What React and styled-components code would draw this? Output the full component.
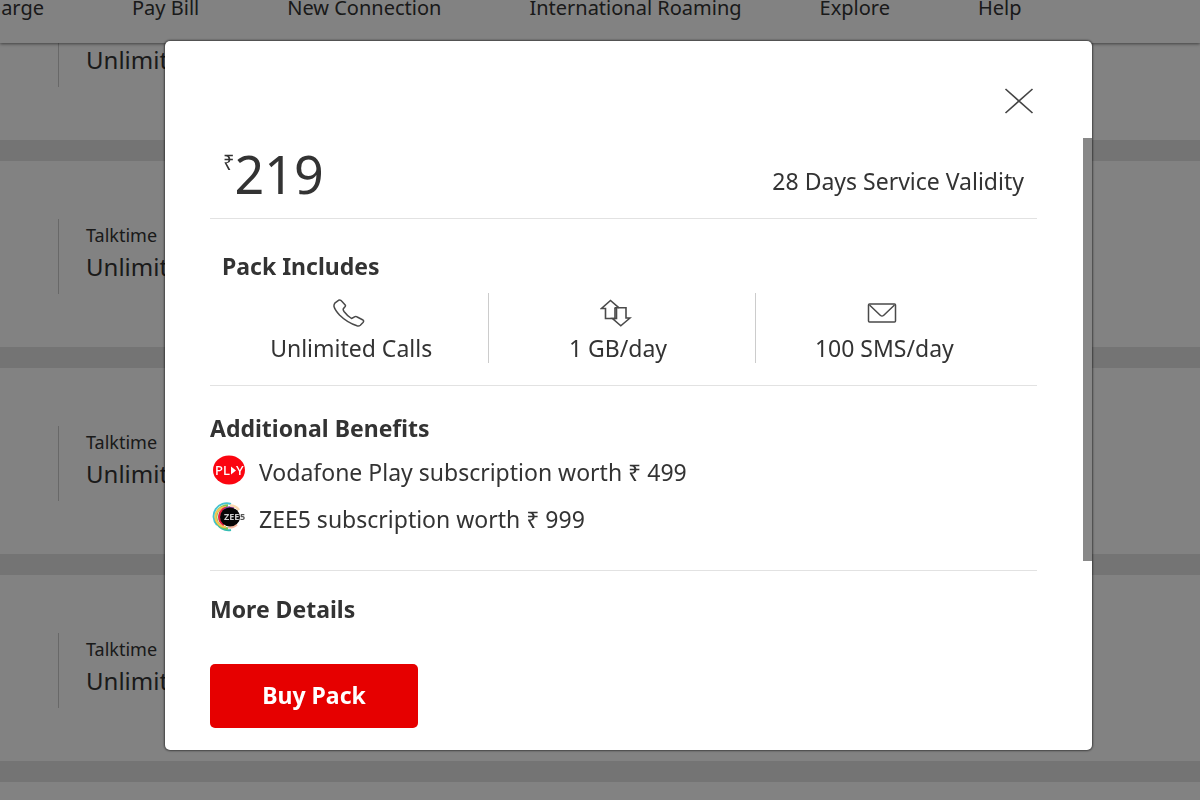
import React, { useState } from 'react';
import styled, { createGlobalStyle } from 'styled-components';

const NAV_ITEMS = [
  { label: 'Recharge', gap: 0, clipped: true },
  { label: 'Pay Bill', gap: 88 },
  { label: 'New Connection', gap: 88 },
  { label: 'International Roaming', gap: 88 },
  { label: 'Explore', gap: 78 },
  { label: 'Help', gap: 88 },
];

const PACK_ROWS = [
  { id: 1, value: 'Unlimited' },
  { id: 2, label: 'Talktime', value: 'Unlimited' },
  { id: 3, label: 'Talktime', value: 'Unlimited' },
  { id: 4, label: 'Talktime', value: 'Unlimited' },
];

const PhoneIcon = () => (
  <svg width="32" height="28" viewBox="0 0 32 28" fill="none" stroke="#4a4a4a" strokeWidth="1.5" strokeLinejoin="round" aria-hidden="true">
    <path d="M5.5 1.3Q7.5 0.4 8.8 2.2L12.2 6Q13 7.2 11.5 8.3L10.2 10Q10 11 11 12.5Q14 16.5 18.5 19.5L22 17.6Q23.2 17.2 24.2 18L30 21Q31.2 22 30 23.5L27.3 26.2Q26 27.3 24 26.8Q14 23.5 6.5 16Q2 11 1 7.5Q0.8 5.5 1.8 4.2Z" />
  </svg>
);

const DataIcon = () => (
  <svg width="32" height="28" viewBox="0 0 32 28" fill="none" stroke="#4a4a4a" strokeWidth="1.6" aria-hidden="true">
    <path d="M15 9V19.5H5.5V9.5H1.5L10.5 1.5L19 8.8" />
    <path d="M14.5 8.8H26V19H30L20.8 26.8L12.5 19.5H16.5V9" />
  </svg>
);

const MailIcon = () => (
  <svg width="30" height="20" viewBox="0 0 30 20" fill="none" stroke="#4a4a4a" strokeWidth="1.5" strokeLinejoin="round" aria-hidden="true">
    <rect x="1.5" y="1" width="27" height="18" rx="1" />
    <path d="M2.5 2L13.5 12.5Q15 13.6 16.5 12.5L27.5 2" />
  </svg>
);

const CloseIcon = () => (
  <svg width="30" height="26" viewBox="0 0 30 26" fill="none" stroke="#444" strokeWidth="1.6" aria-hidden="true">
    <path d="M1.5 1L28.5 25M28.5 1L1.5 25" />
  </svg>
);

const PlayLogo = () => (
  <svg width="34" height="30" viewBox="0 0 34 30" aria-hidden="true">
    <ellipse cx="17" cy="15" rx="16" ry="14.5" fill="#fb0510" />
    <text x="3" y="20" fontFamily="'Noto Sans', sans-serif" fontWeight="500" fontSize="13" fill="#fff">PL</text>
    <path d="M19 11.5L24 15.5L19 19.5Z" fill="#fff" />
    <text x="24" y="20" fontFamily="'Noto Sans', sans-serif" fontWeight="500" fontSize="13" fill="#fff">Y</text>
  </svg>
);

const ZeeLogo = () => (
  <svg width="34" height="30" viewBox="0 0 34 30" fill="none" aria-hidden="true">
    <path d="M19 2A13 13 0 0 0 5 23" stroke="#45c3cf" strokeWidth="2" />
    <path d="M4 19A13 13 0 0 0 19 28" stroke="#35bdb4" strokeWidth="2" />
    <path d="M16 3.5A12 11.5 0 0 0 16 26.5" stroke="#7cc352" strokeWidth="2.5" />
    <path d="M14 5A10.5 10 0 0 0 14 25" stroke="#f6c453" strokeWidth="2" />
    <path d="M14 6A10 9.5 0 0 0 12 23" stroke="#e5203f" strokeWidth="2.5" />
    <path d="M12 7.5A10 9.5 0 0 1 22 6" stroke="#8a3a9c" strokeWidth="2" />
    <path d="M18 3.5A11.5 11 0 0 1 27 8" stroke="#f9d9ae" strokeWidth="2.5" />
    <path d="M16 25.5A11 10.5 0 0 0 25 22.5" stroke="#f3b59c" strokeWidth="2" />
    <ellipse cx="18" cy="15" rx="10" ry="9.5" fill="#060606" />
    <text x="12" y="18" fontFamily="'Noto Sans', sans-serif" fontWeight="700" fontSize="9" fill="#ccc">ZEE</text>
    <text x="28" y="18" fontFamily="'Noto Sans', sans-serif" fontWeight="700" fontSize="9" fill="#555">5</text>
  </svg>
);

const PACK_INCLUDES = [
  { label: 'Unlimited Calls', Icon: PhoneIcon },
  { label: '1 GB/day', Icon: DataIcon },
  { label: '100 SMS/day', Icon: MailIcon },
];

const BENEFITS = [
  { label: 'Vodafone Play subscription worth ₹ 499', Logo: PlayLogo },
  { label: 'ZEE5 subscription worth ₹ 999', Logo: ZeeLogo },
];

const PackModal = ({ onClose }) => (
  <Overlay>
    <Modal role="dialog" aria-modal="true" aria-label="Pack details">
      <ModalHeader>
        <CloseButton type="button" aria-label="Close" onClick={onClose}>
          <CloseIcon />
        </CloseButton>
      </ModalHeader>
      <ModalBody>
        <ModalContent>
          <PriceRow>
            <Price><Currency>₹</Currency>219</Price>
            <Validity>28 Days Service Validity</Validity>
          </PriceRow>
          <IncludesSection>
            <SectionTitle>Pack Includes</SectionTitle>
            <IncludesGrid>
              {PACK_INCLUDES.map(({ label, Icon }) => (
                <IncludesItem key={label}>
                  <IconSlot><Icon /></IconSlot>
                  {label}
                </IncludesItem>
              ))}
            </IncludesGrid>
          </IncludesSection>
          <BenefitsSection>
            <SectionTitle>Additional Benefits</SectionTitle>
            <BenefitList>
              {BENEFITS.map(({ label, Logo }) => (
                <Benefit key={label}>
                  <LogoSlot><Logo /></LogoSlot>
                  {label}
                </Benefit>
              ))}
            </BenefitList>
          </BenefitsSection>
          <DetailsSection>
            <SectionTitle>More Details</SectionTitle>
            <BuyButton type="button">Buy Pack</BuyButton>
          </DetailsSection>
        </ModalContent>
        <ScrollThumb />
      </ModalBody>
    </Modal>
  </Overlay>
);

export default function App() {
  const [isOpen, setIsOpen] = useState(true);

  return (
    <Page>
      <GlobalStyle />
      <Nav>
        {NAV_ITEMS.map(({ label, gap, clipped }) => (
          <NavSlot key={label} $gap={gap} $clipped={clipped}>
            <NavLink href="#">{label}</NavLink>
          </NavSlot>
        ))}
      </Nav>
      <PackList>
        {PACK_ROWS.map(({ id, label, value }) => (
          <PackCard key={id}>
            <PackColumn>
              {label && <PackLabel>{label}</PackLabel>}
              <PackValue>{value}</PackValue>
            </PackColumn>
          </PackCard>
        ))}
        <PackCard />
      </PackList>
      {isOpen && <PackModal onClose={() => setIsOpen(false)} />}
    </Page>
  );
}

const GlobalStyle = createGlobalStyle`
  * {
    box-sizing: border-box;
  }

  body {
    margin: 0;
    font-family: 'Noto Sans', 'Open Sans', sans-serif;
    color: #333;
  }
`;

const Page = styled.div`
  height: 100vh;
  overflow: hidden;
  background-color: #e4e4e4;
`;

const Nav = styled.nav`
  position: relative;
  z-index: 1;
  display: flex;
  height: 43px;
  background-color: #fff;
  box-shadow: 0 1px 3px rgba(0, 0, 0, 0.5);
`;

const NavSlot = styled.div`
  display: flex;
  flex: none;
  justify-content: flex-end;
  width: ${({ $clipped }) => ($clipped ? '44px' : 'auto')};
  margin-left: ${({ $gap }) => $gap}px;
`;

const NavLink = styled.a`
  height: 16px;
  font-size: 20px;
  line-height: 16px;
  color: #333;
  text-decoration: none;
  white-space: nowrap;
`;

/* the list is scrolled part of the way under the nav */
const PackList = styled.main`
  display: flex;
  flex-direction: column;
  gap: 21px;
  margin-top: -89px;
`;

const PackCard = styled.article`
  padding: 58px 58px 53px;
  background-color: #fff;
`;

const PackColumn = styled.div`
  display: flex;
  flex-direction: column;
  justify-content: flex-end;
  height: 75px;
  padding: 0 0 11px 27px;
  border-left: 1px solid #ccc;
`;

const PackLabel = styled.div`
  font-size: 18px;
  line-height: 32px;
`;

const PackValue = styled.div`
  font-size: 24px;
  line-height: 32px;
`;

const Overlay = styled.div`
  position: fixed;
  inset: 0;
  z-index: 2;
  padding: 41px 108px 49px 165px;
  background-color: rgba(0, 0, 0, 0.49);
`;

const Modal = styled.section`
  border-radius: 5px;
  background-color: #fff;
  box-shadow: 0 0 2px 1px rgba(0, 0, 0, 0.5);
`;

const ModalHeader = styled.header`
  display: flex;
  justify-content: flex-end;
  padding: 47px 58px 24px;
`;

const CloseButton = styled.button`
  display: flex;
  padding: 0;
  border: none;
  background: none;
  cursor: pointer;
`;

const ModalBody = styled.div`
  display: grid;
  grid-template-columns: 1fr 9px;
`;

const ModalContent = styled.div`
  padding: 0 46px 22px 45px;
  font-size: 23px;
  line-height: 30px;
`;

const ScrollThumb = styled.div`
  height: 423px;
  background-color: #888;
`;

const PriceRow = styled.div`
  display: flex;
  justify-content: space-between;
  height: 81px;
  padding: 0 13px;
  border-bottom: 1px solid #e2e2e2;
`;

const Price = styled.div`
  display: flex;
  font-size: 52px;
  line-height: 72px;
`;

const Currency = styled.span`
  font-size: 20px;
  line-height: 50px;
`;

const Validity = styled.div`
  padding-top: 28px;
`;

const SectionTitle = styled.h2`
  margin: 0;
  font-size: 23px;
  font-weight: 700;
  line-height: 30px;
`;

const IncludesSection = styled.section`
  padding: 32px 16px 22px 12px;
  border-bottom: 1px solid #e2e2e2;
`;

const IncludesGrid = styled.div`
  display: grid;
  grid-template-columns: repeat(3, 1fr);
  margin-top: 12px;
`;

const IncludesItem = styled.div`
  display: flex;
  flex-direction: column;
  align-items: center;
  height: 70px;
  padding-right: 8px;

  & + & {
    border-left: 1px solid #ccc;
  }
`;

const IconSlot = styled.div`
  display: flex;
  align-items: center;
  height: 40px;
  padding-right: 4px;
`;

const BenefitsSection = styled.section`
  padding: 27px 0 28px;
  border-bottom: 1px solid #e2e2e2;
`;

const BenefitList = styled.ul`
  margin: 5px 0 0;
  padding: 0;
  list-style: none;
`;

const Benefit = styled.li`
  display: flex;
  align-items: center;
  gap: 13px;
  height: 47px;
  padding-left: 2px;
`;

const LogoSlot = styled.span`
  display: flex;
  padding-bottom: 4px;
`;

const DetailsSection = styled.section`
  padding-top: 23px;
`;

const BuyButton = styled.button`
  display: block;
  width: 208px;
  height: 64px;
  margin-top: 40px;
  padding: 0 0 2px;
  border: none;
  border-radius: 5px;
  background-color: #e60000;
  color: #fff;
  font-family: inherit;
  font-size: 23px;
  font-weight: 700;
  cursor: pointer;
`;
